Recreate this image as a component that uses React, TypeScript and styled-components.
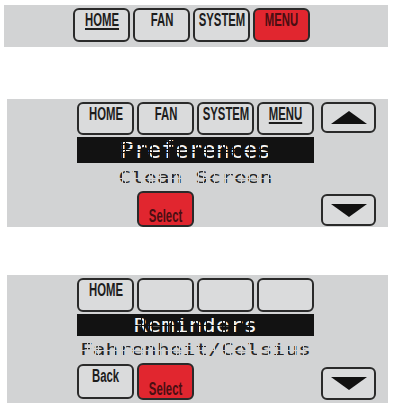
import React from "react";
import styled, { createGlobalStyle } from "styled-components";

const GlobalStyle = createGlobalStyle`
  body {
    margin: 0;
    background: #ffffff;
    font-family: "Liberation Sans", Arial, sans-serif;
  }
`;

const Page = styled.div`
  width: 394px;
  height: 410px;
  display: flex;
  flex-direction: column;
`;

const Panel = styled.div<{ $left: number; $top: number; $height: number }>`
  margin: ${p => p.$top}px 6px 0 ${p => p.$left}px;
  height: ${p => p.$height}px;
  box-sizing: border-box;
  background: #d2d3d4;
  display: grid;
  grid-template-columns: repeat(4, 57px) 59px;
  column-gap: 3px;
  align-content: start;
`;

const TopPanel = styled(Panel)`
  padding: 3px 0 0 69px;
`;

const MenuPanel = styled(Panel)<{ $rows: string }>`
  padding: 3px 0 0 70px;
  grid-template-rows: ${p => p.$rows};
  row-gap: 2px;
`;

const Key = styled.div<{ $red?: boolean; $h?: number; $bottomLabel?: boolean; $offset?: number }>`
  height: ${p => p.$h ?? 34}px;
  margin-top: ${p => p.$offset ?? 0}px;
  box-sizing: border-box;
  border: 2px solid #2a2a2a;
  border-radius: 6px;
  background: ${p => (p.$red ? "#e1262f" : "#dadbdc")};
  color: ${p => (p.$red ? "#4a0e12" : "#1d1d1d")};
  display: flex;
  justify-content: center;
  align-items: ${p => (p.$bottomLabel ? "flex-end" : "flex-start")};
  padding: ${p => (p.$bottomLabel ? "0 0 0" : "1px 0 0")};
  font-size: 18px;
  font-weight: bold;
  line-height: 18px;
`;

// condensed label: the keys use a narrow bold face
const Label = styled.span<{ $underline?: boolean }>`
  display: inline-block;
  transform: scaleX(0.63);
  white-space: nowrap;
  text-decoration: ${p => (p.$underline ? "underline" : "none")};
  text-decoration-thickness: 2px;
  text-underline-offset: 2px;
`;

const ArrowKey = styled(Key)`
  margin-left: 4px;
  align-self: start;
  align-items: center;
  padding: 0;
`;

const LcdBar = styled.div<{ $dark?: boolean }>`
  grid-column: 1 / span 4;
  position: relative;
  background: ${p => (p.$dark ? "#121212" : "transparent")};
  color: ${p => (p.$dark ? "#f4f4f4" : "#262626")};
  font-family: "DejaVu Sans Mono", "Liberation Mono", monospace;
  display: flex;
  justify-content: center;
  align-items: center;
  white-space: nowrap;
  overflow: hidden;

  &::after {
    content: "";
    position: absolute;
    inset: 0;
    background:
      repeating-linear-gradient(90deg, transparent 0 2.2px, ${p => (p.$dark ? "#121212" : "#d2d3d4")} 2.2px 2.7px),
      repeating-linear-gradient(0deg, transparent 0 2.2px, ${p => (p.$dark ? "#121212" : "#d2d3d4")} 2.2px 2.7px);
    pointer-events: none;
  }
`;

const LcdText = styled.span<{ $size: number; $squash: number }>`
  display: inline-block;
  font-size: ${p => p.$size}px;
  line-height: 1;
  letter-spacing: 0.2px;
  transform: scaleY(${p => p.$squash});
`;

const Spacer = styled.div<{ $span: number }>`
  grid-column: span ${p => p.$span};
`;

const Triangle = ({ up }: { up?: boolean }) => (
  <svg width="36" height="13" viewBox="0 0 36 13">
    <polygon points={up ? "18,0 36,13 0,13" : "0,0 36,0 18,13"} fill="#111" />
  </svg>
);

export default function App() {
  return (
    <Page>
      <GlobalStyle />
      <TopPanel $left={4} $top={5} $height={42}>
        <Key><Label $underline>HOME</Label></Key>
        <Key><Label>FAN</Label></Key>
        <Key><Label>SYSTEM</Label></Key>
        <Key $red><Label>MENU</Label></Key>
      </TopPanel>

      <MenuPanel $left={7} $top={52} $height={128} $rows="33px 26px 24px 36px">
        <Key $h={33}><Label>HOME</Label></Key>
        <Key $h={33}><Label>FAN</Label></Key>
        <Key $h={33}><Label>SYSTEM</Label></Key>
        <Key $h={33}><Label $underline>MENU</Label></Key>
        <ArrowKey $h={31}><Triangle up /></ArrowKey>

        <LcdBar $dark><LcdText $size={22.5} $squash={1.05}>Preferences</LcdText></LcdBar>
        <Spacer $span={1} />

        <LcdBar><LcdText $size={21} $squash={0.78}>Clean Screen</LcdText></LcdBar>
        <Spacer $span={1} />

        <Spacer $span={1} />
        <Key $red $bottomLabel $h={36}><Label>Select</Label></Key>
        <Spacer $span={2} />
        <ArrowKey $h={32} $offset={3}><Triangle /></ArrowKey>
      </MenuPanel>

      <MenuPanel $left={7} $top={48} $height={128} $rows="34px 22px 23px 37px">
        <Key><Label>HOME</Label></Key>
        <Key />
        <Key />
        <Key />
        <Spacer $span={1} />

        <LcdBar $dark><LcdText $size={22.5} $squash={0.9}>Reminders</LcdText></LcdBar>
        <Spacer $span={1} />

        <LcdBar><LcdText $size={21} $squash={0.78}>Fahrenheit/Celsius</LcdText></LcdBar>
        <Spacer $span={1} />

        <Key $h={35} $offset={1}><Label>Back</Label></Key>
        <Key $red $bottomLabel $h={37}><Label>Select</Label></Key>
        <Spacer $span={2} />
        <ArrowKey $h={33} $offset={4}><Triangle /></ArrowKey>
      </MenuPanel>
    </Page>
  );
}
